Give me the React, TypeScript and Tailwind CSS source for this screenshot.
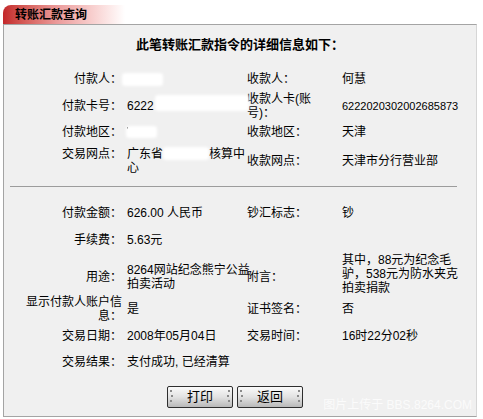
import type { ReactNode } from 'react';

const Blob = ({ w, h, className = '' }: { w: number; h: number; className?: string }) => (
  <span
    className={`inline-block shrink-0 rounded-[3px] bg-white blur-[1.5px] ${className}`}
    style={{ width: w, height: h }}
  />
);

function Row({
  h,
  label,
  value,
  rLabel,
  rValue,
  labelClass = '',
}: {
  h: number;
  label: ReactNode;
  value?: ReactNode;
  rLabel?: ReactNode;
  rValue?: ReactNode;
  labelClass?: string;
}) {
  return (
    <div className="grid grid-cols-[118px_123px_95px_1fr] items-center" style={{ height: h }}>
      <div className={`whitespace-nowrap text-right leading-[14px] ${labelClass}`}>{label}</div>
      <div className="flex items-center pl-[5px] leading-[14px]">{value}</div>
      <div className="whitespace-nowrap pl-[2px] leading-[14px]">{rLabel}</div>
      <div className="whitespace-nowrap pl-[2px] leading-[14px]">{rValue}</div>
    </div>
  );
}

function Btn({ children }: { children: ReactNode }) {
  return (
    <button className="relative flex h-[22px] w-[66px] items-center justify-center rounded-[2px] border border-[#2e2e2e] bg-gradient-to-b from-[#fafafa] via-[#e2e2e2] to-[#b9b9b9] text-[13px] text-black">
      <span className="absolute left-[2px] top-[3px] flex flex-col gap-[3px]">
        <i className="block h-[2px] w-[2px] bg-[#8a8a8a]" />
        <i className="ml-[1px] block h-[2px] w-[2px] bg-[#8a8a8a]" />
        <i className="block h-[2px] w-[2px] bg-[#8a8a8a]" />
      </span>
      <span className="absolute right-[2px] top-[3px] flex flex-col gap-[3px]">
        <i className="block h-[2px] w-[2px] bg-[#8a8a8a]" />
        <i className="-ml-[1px] block h-[2px] w-[2px] bg-[#8a8a8a]" />
        <i className="block h-[2px] w-[2px] bg-[#8a8a8a]" />
      </span>
      {children}
    </button>
  );
}

export default function App() {
  return (
    <div className="h-[419px] w-[483px] overflow-hidden bg-white pl-[3px] pt-[5px] font-['Liberation_Sans','Noto_Sans_CJK_SC',sans-serif] text-[12px] text-black">
      <div className="flex h-[19px] w-[122px] items-center rounded-tl-[8px] bg-gradient-to-r from-[#c3262a] via-[#eb9c9c] via-45% to-white pl-[12px] font-bold">
        转账汇款查询
      </div>

      <div className="relative h-[393px] w-[474px] border border-[#a4a4a4] border-r-[#d6d6d6] bg-[#f0f0f0]">
        <div className="h-[41px] pt-[13px] text-center text-[13px] font-bold leading-[14px]">
          此笔转账汇款指令的详细信息如下：
        </div>

        <Row h={26} label="付款人：" value={<Blob w={41} h={13} className="-ml-[5px]" />} rLabel="收款人：" rValue="何慧" />
        <Row
          h={26}
          label="付款卡号："
          value={
            <>
              6222
              <Blob w={94} h={16} className="-mt-[6px] ml-[1px]" />
            </>
          }
          rLabel={
            <>
              收款人卡(账
              <br />
              号)：
            </>
          }
          rValue={<span className="text-[11px]">6222020302002685873</span>}
        />
        <Row
          h={28}
          label="付款地区："
          value={
            <>
              <span className="-mt-[9px] h-[2px] w-[1px] bg-black" />
              <Blob w={31} h={12} className="-ml-[2px]" />
            </>
          }
          rLabel="收款地区："
          rValue="天津"
        />
        <Row
          h={30}
          label="交易网点："
          labelClass="pb-[14px]"
          value={
            <div className="whitespace-nowrap">
              <div className="flex items-center">
                广东省
                <Blob w={46} h={13} className="-mt-[1px]" />
                核算中
              </div>
              <div>心</div>
            </div>
          }
          rLabel="收款网点："
          rValue="天津市分行营业部"
        />

        <div className="h-[10px]" />
        <div className="ml-[6px] h-[1px] w-[447px] bg-[#9c9c9c]" />
        <div className="h-[13px]" />

        <Row h={26} label="付款金额：" value="626.00 人民币" rLabel="钞汇标志：" rValue="钞" />
        <Row h={27} label="手续费：" value="5.63元" />
        <Row
          h={42}
          label="用途："
          labelClass="pt-[6px]"
          value={
            <div className="whitespace-nowrap pt-[6px]">
              8264网站纪念熊宁公益
              <br />
              拍卖活动
            </div>
          }
          rLabel={<div className="pt-[6px]">附言：</div>}
          rValue={
            <>
              其中，88元为纪念毛
              <br />
              驴，538元为防水夹克
              <br />
              拍卖捐款
            </>
          }
        />
        <Row
          h={28}
          label={
            <>
              显示付款人账户信
              <br />
              息：
            </>
          }
          value="是"
          rLabel="证书签名："
          rValue="否"
        />
        <Row h={26} label="交易日期：" value="2008年05月04日" rLabel="交易时间：" rValue="16时22分02秒" />
        <Row h={26} label="交易结果：" value="支付成功, 已经清算" />

        <div className="mt-[11px] flex justify-center gap-[4px] pr-[10px]">
          <Btn>打印</Btn>
          <Btn>返回</Btn>
        </div>

        <div className="absolute bottom-[2px] right-[4px] whitespace-nowrap text-[12px] text-white/75">
          图片上传于 BBS.8264.COM
        </div>
      </div>
    </div>
  );
}
